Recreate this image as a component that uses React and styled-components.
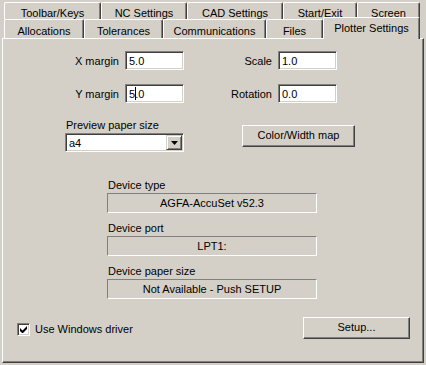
import styled, { createGlobalStyle } from "styled-components";

const GlobalStyle = createGlobalStyle`
  html, body {
    margin: 0;
    padding: 0;
    background: #d4d0c8;
  }
  body {
    font-family: "Liberation Sans", Arial, sans-serif;
    font-size: 11px;
    color: #000;
  }
`;

const Dialog = styled.div`
  width: 426px;
  height: 365px;
  box-sizing: border-box;
  padding: 2px 2px 0 2px;
  background: #d4d0c8;
  overflow: hidden;
`;

const TabRow = styled.div`
  display: flex;
  padding-left: 2px;
  height: ${(p) => p.$height}px;
`;

const Tab = styled.div`
  position: relative;
  box-sizing: border-box;
  width: ${(p) => p.$width}px;
  height: ${(p) => (p.$active ? "22px" : "100%")};
  margin-top: ${(p) => (p.$active ? "-2px" : "0")};
  padding-top: ${(p) => p.$pad}px;
  line-height: 14px;
  text-align: center;
  white-space: nowrap;
  background: #d4d0c8;
  border-top: 1px solid #fff;
  border-left: 1px solid #fff;
  border-right: 1px solid #404040;
  border-radius: 2px 2px 0 0;
  box-shadow: inset -1px 0 #808080;
  z-index: ${(p) => (p.$active ? 2 : 0)};
`;

const Panel = styled.div`
  display: flex;
  flex-direction: column;
  box-sizing: border-box;
  height: 325px;
  padding: 12px 0 23px 0;
  border-top: 1px solid #fff;
  border-left: 1px solid #fff;
  border-right: 1px solid #404040;
  border-bottom: 1px solid #404040;
  box-shadow: inset -1px -1px #808080;
`;

const FieldRow = styled.div`
  display: flex;
  align-items: center;
  height: 19px;
  margin-top: ${(p) => p.$top || 0}px;
`;

const Label = styled.div`
  width: ${(p) => p.$width}px;
  text-align: right;
  margin-right: ${(p) => p.$gap}px;
`;

const sunken = `
  box-sizing: border-box;
  border-top: 1px solid #808080;
  border-left: 1px solid #808080;
  border-right: 1px solid #fff;
  border-bottom: 1px solid #fff;
`;

const TextField = styled.div`
  ${sunken}
  width: 59px;
  height: 19px;
  background: #fff;
  box-shadow: inset 1px 1px #404040, inset -1px -1px #d4d0c8;
  padding: 2px 0 0 3px;
  line-height: 14px;
  white-space: nowrap;
`;

const Caret = styled.span`
  display: inline-block;
  width: 1px;
  height: 13px;
  background: #000;
  vertical-align: -2px;
  margin: 0 -1px 0 0;
`;

const PreviewSection = styled.div`
  display: flex;
  align-items: flex-start;
  margin: 16px 0 0 62px;
`;

const PreviewColumn = styled.div`
  display: flex;
  flex-direction: column;
  width: 119px;
`;

const SmallLabel = styled.div`
  line-height: 13px;
  margin-left: ${(p) => p.$indent || 0}px;
`;

const Combo = styled.div`
  ${sunken}
  display: flex;
  align-items: center;
  justify-content: space-between;
  width: 119px;
  height: 19px;
  margin-top: 1px;
  padding: 0 1px 0 3px;
  background: #fff;
  box-shadow: inset 1px 1px #404040, inset -1px -1px #d4d0c8;
`;

const DropButton = styled.div`
  box-sizing: border-box;
  display: flex;
  align-items: center;
  justify-content: center;
  width: 16px;
  height: 15px;
  background: #d4d0c8;
  border-top: 1px solid #d4d0c8;
  border-left: 1px solid #d4d0c8;
  border-right: 1px solid #404040;
  border-bottom: 1px solid #404040;
  box-shadow: inset 1px 1px #fff, inset -1px -1px #808080;
`;

const Button = styled.div`
  box-sizing: border-box;
  width: ${(p) => p.$width}px;
  height: ${(p) => p.$height}px;
  margin: ${(p) => p.$margin || "0"};
  line-height: ${(p) => p.$height - 3}px;
  text-align: center;
  background: #d4d0c8;
  border-top: 1px solid #fff;
  border-left: 1px solid #fff;
  border-right: 1px solid #404040;
  border-bottom: 1px solid #404040;
  box-shadow: inset -1px -1px #808080;
`;

const DeviceSection = styled.div`
  display: flex;
  flex-direction: column;
  width: 210px;
  margin: 27px 0 0 104px;
`;

const DeviceGroup = styled.div`
  display: flex;
  flex-direction: column;
  margin-top: ${(p) => p.$top || 0}px;
`;

const InfoBox = styled.div`
  box-sizing: border-box;
  height: 20px;
  margin-top: 1px;
  line-height: 18px;
  text-align: center;
  border-top: 1px solid #808080;
  border-left: 1px solid #808080;
  border-right: 1px solid #fff;
  border-bottom: 1px solid #fff;
`;

const BottomRow = styled.div`
  display: flex;
  align-items: center;
  justify-content: space-between;
  margin-top: auto;
  padding: 0 13px 0 14px;
`;

const CheckLabel = styled.div`
  display: flex;
  align-items: center;
  gap: 5px;
  margin-top: 2px;
`;

const CheckBox = styled.div`
  ${sunken}
  display: flex;
  align-items: center;
  justify-content: center;
  width: 13px;
  height: 13px;
  background: #fff;
  box-shadow: inset 1px 1px #404040, inset -1px -1px #d4d0c8;
`;

const topTabs = [
  ["Toolbar/Keys", 97],
  ["NC Settings", 86],
  ["CAD Settings", 96],
  ["Start/Exit", 74],
  ["Screen", 63],
];

const bottomTabs = [
  ["Allocations", 80],
  ["Tolerances", 79],
  ["Communications", 103],
  ["Files", 57],
  ["Plotter Settings", 97, true],
];

const devices = [
  ["Device type", "AGFA-AccuSet v52.3"],
  ["Device port", "LPT1:"],
  ["Device paper size", "Not Available - Push SETUP"],
];

export default function App() {
  return (
    <>
      <GlobalStyle />
      <Dialog>
        <TabRow $height={17}>
          {topTabs.map(([name, w]) => (
            <Tab key={name} $width={w} $pad={3}>
              {name}
            </Tab>
          ))}
        </TabRow>
        <TabRow $height={19}>
          {bottomTabs.map(([name, w, active]) => (
            <Tab key={name} $width={w} $pad={active ? 3 : 4} $active={active}>
              {name}
            </Tab>
          ))}
        </TabRow>
        <Panel>
          <FieldRow>
            <Label $width={116} $gap={6}>X margin</Label>
            <TextField>5.0</TextField>
            <Label $width={88} $gap={6}>Scale</Label>
            <TextField>1.0</TextField>
          </FieldRow>
          <FieldRow $top={14}>
            <Label $width={116} $gap={6}>Y margin</Label>
            <TextField>
              5<Caret />.0
            </TextField>
            <Label $width={88} $gap={6}>Rotation</Label>
            <TextField>0.0</TextField>
          </FieldRow>

          <PreviewSection>
            <PreviewColumn>
              <SmallLabel $indent={1}>Preview paper size</SmallLabel>
              <Combo>
                <span>a4</span>
                <DropButton>
                  <svg width="7" height="4" viewBox="0 0 7 4">
                    <path d="M0 0h7L3.5 4z" fill="#000" />
                  </svg>
                </DropButton>
              </Combo>
            </PreviewColumn>
            <Button $width={113} $height={22} $margin="6px 0 0 58px">
              Color/Width map
            </Button>
          </PreviewSection>

          <DeviceSection>
            {devices.map(([label, value], i) => (
              <DeviceGroup key={label} $top={i === 0 ? 0 : 9}>
                <SmallLabel $indent={1}>{label}</SmallLabel>
                <InfoBox>{value}</InfoBox>
              </DeviceGroup>
            ))}
          </DeviceSection>

          <BottomRow>
            <CheckLabel>
              <CheckBox>
                <svg width="7" height="7" viewBox="0 0 7 7">
                  <path
                    d="M0 2v3l2 2h1l4-4V0L2.5 4.5z"
                    fill="#000"
                  />
                </svg>
              </CheckBox>
              Use Windows driver
            </CheckLabel>
            <Button $width={107} $height={22}>
              Setup...
            </Button>
          </BottomRow>
        </Panel>
      </Dialog>
    </>
  );
}
